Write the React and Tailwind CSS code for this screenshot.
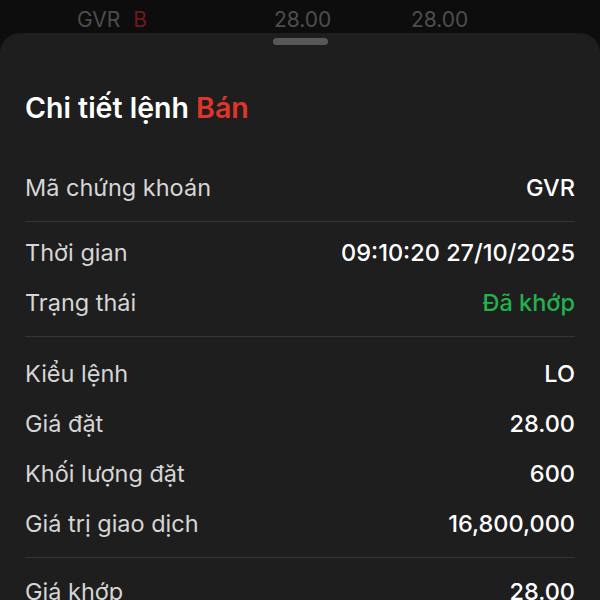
import React from "react";

const font = { fontFamily: "Inter, 'Noto Sans', sans-serif" };

function Row({ label, value, valueClass = "text-white" }) {
  return (
    <div className="flex h-[50px] items-center justify-between">
      <span className="text-[23.5px] text-[#d6d6d6]">{label}</span>
      <span className={`text-[23.5px] font-medium ${valueClass}`}>{value}</span>
    </div>
  );
}

function Divider() {
  return <div className="h-px bg-[#363636]" />;
}

export default function App() {
  return (
    <div className="flex h-[600px] w-[600px] flex-col overflow-hidden bg-[#0d0d0d]" style={font}>
      <div className="flex h-[33px] shrink-0 items-center pl-[77px] pt-[6px] text-[21px] text-[#4d4d4d]">
        <span className="flex w-[197px] items-center">
          <span>GVR</span>
          <span className="ml-[13px] text-[#6e1a1a]">B</span>
        </span>
        <span className="w-[137px]">28.00</span>
        <span>28.00</span>
      </div>
      <div className="flex flex-1 flex-col rounded-t-[20px] bg-[#1e1e1e] px-[25px]">
        <div className="flex justify-center pt-[5px]">
          <div className="h-[7px] w-[55px] rounded-full bg-[#585858]" />
        </div>
        <div className="mt-[49px] flex h-[28px] items-center text-[28.5px] font-semibold text-white">
          <span>Chi tiết lệnh&nbsp;</span>
          <span className="text-[#e0352b]">Bán</span>
        </div>
        <div className="mt-[41px]">
          <Row label="Mã chứng khoán" value="GVR" />
        </div>
        <div className="mt-[8px]">
          <Divider />
        </div>
        <div className="mt-[6px]">
          <Row label="Thời gian" value="09:10:20 27/10/2025" />
          <Row label="Trạng thái" value="Đã khớp" valueClass="text-[#23b14d]" />
        </div>
        <div className="mt-[8px]">
          <Divider />
        </div>
        <div className="mt-[12px]">
          <Row label="Kiểu lệnh" value="LO" />
          <Row label="Giá đặt" value="28.00" />
          <Row label="Khối lượng đặt" value="600" />
          <Row label="Giá trị giao dịch" value="16,800,000" />
        </div>
        <div className="mt-[8px]">
          <Divider />
        </div>
        <div className="mt-[9px]">
          <Row label="Giá khớp" value="28.00" />
        </div>
      </div>
    </div>
  );
}
